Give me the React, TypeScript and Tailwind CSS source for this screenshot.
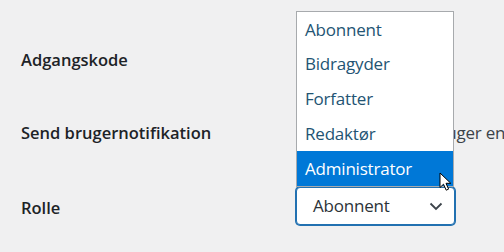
import React from 'react';

const roles = ['Abonnent', 'Bidragyder', 'Forfatter', 'Redaktør', 'Administrator'];

const Cursor: React.FC = () => (
  <svg width="14" height="20" viewBox="0 0 14 20" className="absolute left-[439px] top-[172px]">
    <path d="M1 1 L1 15.5 L4.5 12.2 L7.2 18.2 L9.6 17.1 L7 11.3 L11.8 11.3 Z" fill="#fff" stroke="#000" strokeWidth="1" strokeLinejoin="round" />
  </svg>
);

const App: React.FC = () => {
  return (
    <div className="relative w-[504px] h-[252px] overflow-hidden bg-[#f0f0f1] font-['Open_Sans',sans-serif]">
      <div className="flex flex-col pt-[24px]">
        <div className="flex items-center h-[72px]">
          <div className="w-[296px] shrink-0 pl-[21px] whitespace-nowrap text-[16.5px] font-semibold text-[#1d2327]">Adgangskode</div>
        </div>
        <div className="flex items-center h-[74px]">
          <div className="w-[296px] shrink-0 pl-[21px] whitespace-nowrap text-[16.5px] font-semibold text-[#1d2327]">Send brugernotifikation</div>
          <div className="flex items-center gap-2 whitespace-nowrap text-[17px] text-[#3c434a] tracking-[-0.2px]">
            <span className="w-4 h-4 shrink-0 border border-[#8c8f94] rounded-sm bg-white" />
            <span>Send den nye bruger en e-mail om deres konto.</span>
          </div>
        </div>
        <div className="flex items-center h-[72px]">
          <div className="w-[296px] shrink-0 pl-[21px] whitespace-nowrap text-[16.5px] font-semibold text-[#1d2327] pt-[4px]">Rolle</div>
          <div className="flex items-center justify-between w-[159px] h-[38px] pl-[16px] pr-[11px] bg-white border border-[#2271b1] rounded-[4px] shadow-[0_0_0_1px_#2271b1] text-[17px] text-[#2c3338] tracking-[-0.2px]">
            <span>Abonnent</span>
            <svg width="14" height="9" viewBox="0 0 14 9">
              <path d="M1.5 1.5 L7 7 L12.5 1.5" fill="none" stroke="#3c434a" strokeWidth="1.8" />
            </svg>
          </div>
        </div>
      </div>

      <ul className="absolute left-[296px] top-[11px] w-[158px] bg-white border border-[#a7aaad] text-[17px] tracking-[-0.2px]">
        {roles.map((r) => (
          <li
            key={r}
            className={
              r === 'Administrator'
                ? 'h-[34.8px] flex items-center pl-[8px] bg-[#0078d7] text-white'
                : 'h-[34.8px] flex items-center pl-[8px] text-[#235473]'
            }
          >
            {r}
          </li>
        ))}
      </ul>
      <Cursor />
    </div>
  );
};

export default App;
